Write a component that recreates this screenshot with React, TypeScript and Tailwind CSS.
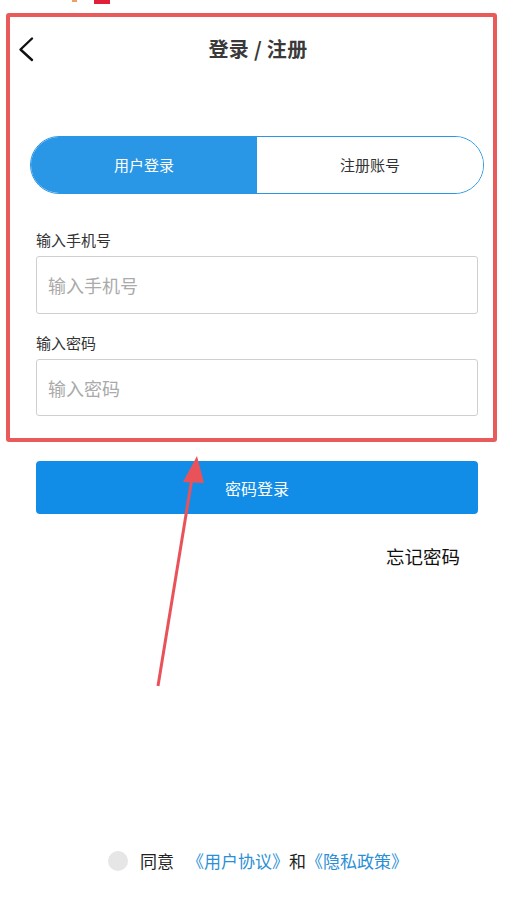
export default function App() {
  return (
    <div
      className="relative w-[516px] h-[909px] bg-white flex flex-col overflow-hidden"
      style={{ fontFamily: '"Noto Sans CJK SC", "Noto Sans", sans-serif' }}
    >
      {/* status bar leftovers */}
      <div className="absolute left-[72px] top-0 w-[5px] h-[2px] bg-[#f0a060]" />
      <div className="absolute left-[94px] top-0 w-[16px] h-[4px] bg-[#e0203a]" />

      {/* header */}
      <div className="relative flex items-center justify-center h-[28px] mt-[35px]">
        <svg className="absolute left-[14px] top-[0px]" width="24" height="28" viewBox="0 0 24 28">
          <polyline points="18,3.5 6.5,14.5 18,25" fill="none" stroke="#111" strokeWidth="2.4" strokeLinecap="round" strokeLinejoin="round" />
        </svg>
        <h1 className="text-[20px] leading-[28px] font-bold text-[#3a3a3a] tracking-[0.3px]">登录 / 注册</h1>
      </div>

      {/* tabs */}
      <div className="ml-[30px] mt-[73px] w-[454px] h-[58px] rounded-full border border-[#2a97e6] grid grid-cols-2 overflow-hidden">
        <div className="bg-[#2a97e6] text-white text-[15px] flex items-center justify-center">用户登录</div>
        <div className="bg-white text-[#333] text-[15px] flex items-center justify-center">注册账号</div>
      </div>

      {/* form */}
      <div className="ml-[36px] w-[442px] flex flex-col">
        <label className="mt-[35px] text-[15px] leading-[22px] text-[#333]">输入手机号</label>
        <input
          className="mt-[5px] h-[58px] border border-[#cfcfcf] rounded-[3px] px-[11px] text-[18px] text-[#333] placeholder:text-[#aaa] outline-none"
          placeholder="输入手机号"
        />
        <label className="mt-[18px] text-[15px] leading-[22px] text-[#333]">输入密码</label>
        <input
          type="password"
          className="mt-[5px] h-[57px] border border-[#cfcfcf] rounded-[3px] px-[11px] text-[18px] text-[#333] placeholder:text-[#aaa] outline-none"
          placeholder="输入密码"
        />
        <button className="mt-[45px] h-[53px] rounded-[4px] bg-[#118de8] text-white text-[16px]">密码登录</button>
      </div>

      <div className="mt-[29px] self-end mr-[56px] text-[18.5px] leading-[26px] text-[#111]">忘记密码</div>

      <div className="flex-1" />

      {/* agreement */}
      <div className="mb-[38px] ml-[108px] flex items-center h-[20px] text-[17px]">
        <span className="w-[20px] h-[20px] rounded-full bg-[#e6e6e6] mr-[12px]" />
        <span className="text-[#222]">同意</span>
        <span className="ml-[13px] text-[#2b8fd6]">《用户协议》</span>
        <span className="text-[#222]">和</span>
        <span className="text-[#2b8fd6]">《隐私政策》</span>
      </div>

      {/* annotation box */}
      <div className="absolute left-[6px] top-[13px] w-[491px] h-[429px] border-4 border-[#e95b5b] rounded-[3px] pointer-events-none" />

      {/* annotation arrow */}
      <svg className="absolute left-0 top-0 pointer-events-none" width="516" height="909">
        <line x1="158" y1="686" x2="192" y2="478" stroke="#ea5259" strokeWidth="3" />
        <polygon points="197,456 183,482 204,483" fill="#ea5259" />
      </svg>
    </div>
  );
}
